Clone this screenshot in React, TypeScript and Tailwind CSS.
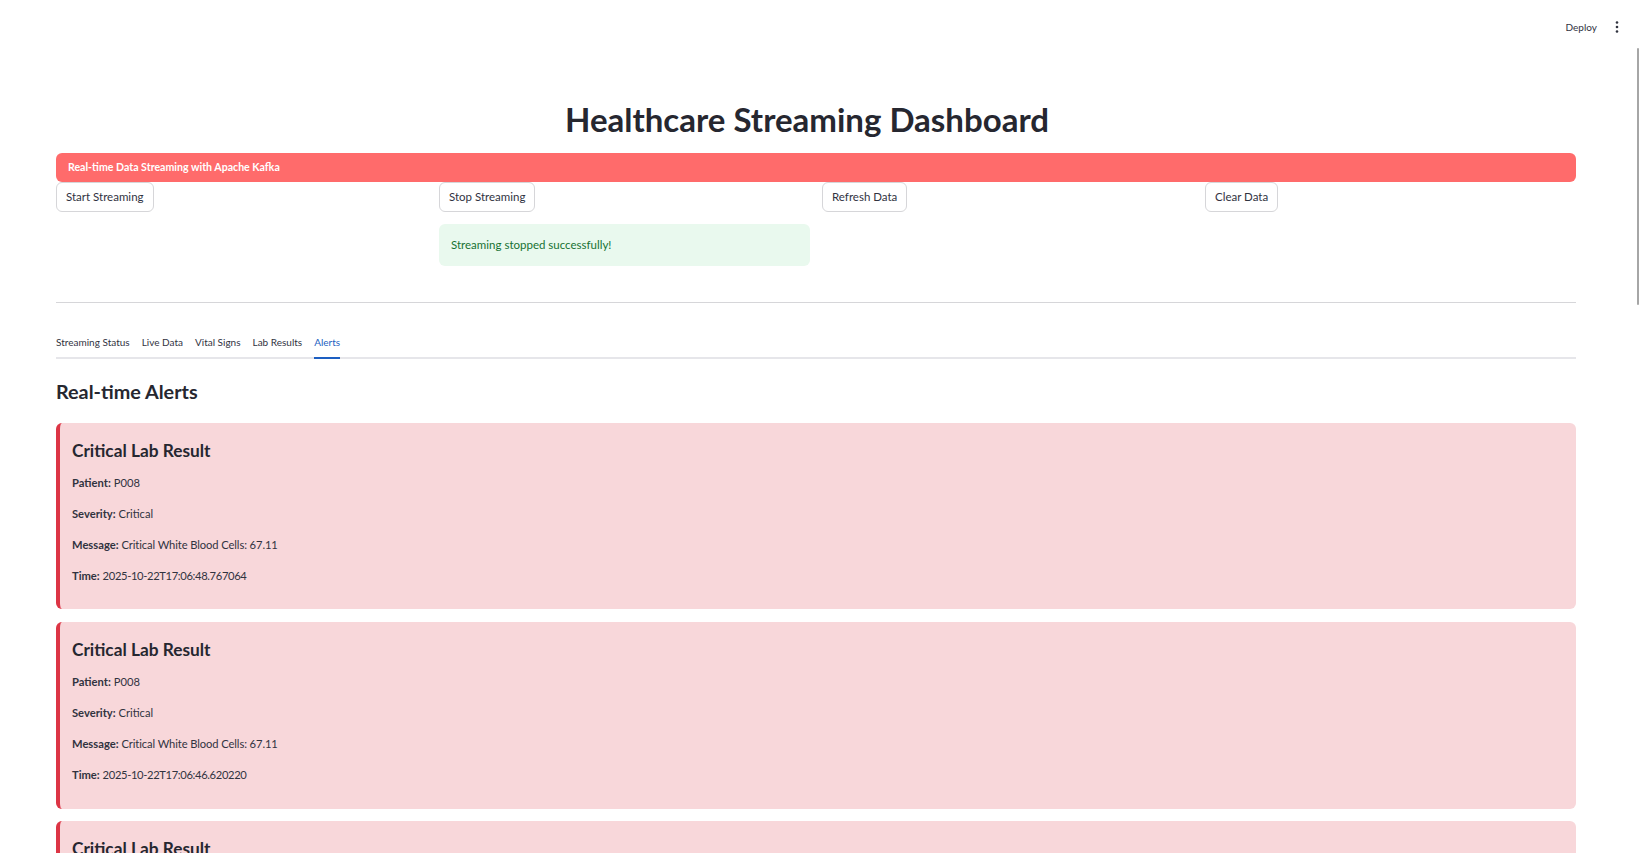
import React from "react";

const alerts = [
  { patient: "P008", severity: "Critical", message: "Critical White Blood Cells: 67.11", time: "2025-10-22T17:06:48.767064" },
  { patient: "P008", severity: "Critical", message: "Critical White Blood Cells: 67.11", time: "2025-10-22T17:06:46.620220" },
  { patient: "P008", severity: "Critical", message: "Critical White Blood Cells: 67.11", time: "2025-10-22T17:06:44.512310" },
];

function Btn({ label }: { label: string }) {
  return (
    <button className="h-[30px] px-[9px] rounded-[6px] border border-[#d6d6d9] bg-white text-[11.5px] text-[#31333f] leading-none">
      {label}
    </button>
  );
}

export default function App() {
  return (
    <div
      className="relative w-full h-[853px] overflow-hidden bg-white text-[#31333f]"
      style={{ fontFamily: "Lato, 'Noto Sans', sans-serif" }}
    >
      {/* header */}
      <div className="h-[52px] pt-[2px] flex items-center justify-end pr-[19px] gap-[17px]">
        <span className="text-[10px] text-[#31333f]">Deploy</span>
        <svg width="6" height="14" viewBox="0 0 6 14" className="text-[#31333f]">
          <circle cx="3" cy="2.5" r="1.3" fill="currentColor" />
          <circle cx="3" cy="7" r="1.3" fill="currentColor" />
          <circle cx="3" cy="11.5" r="1.3" fill="currentColor" />
        </svg>
      </div>
      <div className="absolute left-[1637px] top-[48px] w-[2px] h-[257px] rounded-full bg-[#a6a6a6]" />

      <main className="pl-[56px] pr-[63px]">
        <h1 className="mt-[47px] pr-[18px] text-center text-[33px] font-bold leading-[40px] text-[#262730]">
          Healthcare Streaming Dashboard
        </h1>

        <div className="mt-[14px] h-[29px] rounded-[6px] bg-[#ff6b6b] flex items-center pl-[12px] text-white text-[10.6px] font-bold">
          Real-time Data Streaming with Apache Kafka
        </div>

        <div className="grid grid-cols-4 gap-x-[12px]">
          <div>
            <Btn label="Start Streaming" />
          </div>
          <div className="flex flex-col items-start gap-[12px]">
            <Btn label="Stop Streaming" />
            <div className="w-full h-[42px] rounded-[6px] bg-[#e9f9ee] flex items-center pl-[12px] text-[11.5px] text-[#177233]">
              Streaming stopped successfully!
            </div>
          </div>
          <div>
            <Btn label="Refresh Data" />
          </div>
          <div>
            <Btn label="Clear Data" />
          </div>
        </div>

        <div className="mt-[36px] h-px bg-[#d6d6d9]" />

        <div className="mt-[25px] relative flex gap-[12px] border-b-2 border-[#e6e6ea]">
          {["Streaming Status", "Live Data", "Vital Signs", "Lab Results", "Alerts"].map((t) => (
            <div
              key={t}
              className={
                "h-[31px] pb-[1px] flex items-center text-[10px] -mb-[2px] border-b-2 " +
                (t === "Alerts" ? "text-[#1d5fc2] border-[#1d5fc2]" : "border-transparent")
              }
            >
              {t}
            </div>
          ))}
        </div>

        <h3 className="mt-[18px] text-[19.8px] font-bold leading-[28px] text-[#262730]">Real-time Alerts</h3>

        <div className="mt-[17.5px] flex flex-col gap-[12.5px]">
          {alerts.map((a, i) => (
            <div key={i} className="rounded-[6px] bg-[#f8d7da] border-l-4 border-[#dc3545] px-[12px] py-[12px]">
              <h4 className="mt-[4px] mb-[10px] text-[17.3px] font-bold leading-[24px] text-[#262730]">
                Critical Lab Result
              </h4>
              <p className="text-[11.2px] leading-[19.2px] mb-[12px]">
                <b>Patient:</b> {a.patient}
              </p>
              <p className="text-[11.2px] leading-[19.2px] mb-[12px]">
                <b>Severity:</b> {a.severity}
              </p>
              <p className="text-[11.2px] leading-[19.2px] mb-[12px]">
                <b>Message:</b> <span className="tracking-[-0.1px]">{a.message}</span>
              </p>
              <p className="text-[11.2px] leading-[19.2px] mb-[12px]">
                <b>Time:</b> <span className="tracking-[-0.35px]">{a.time}</span>
              </p>
            </div>
          ))}
        </div>
      </main>
    </div>
  );
}
